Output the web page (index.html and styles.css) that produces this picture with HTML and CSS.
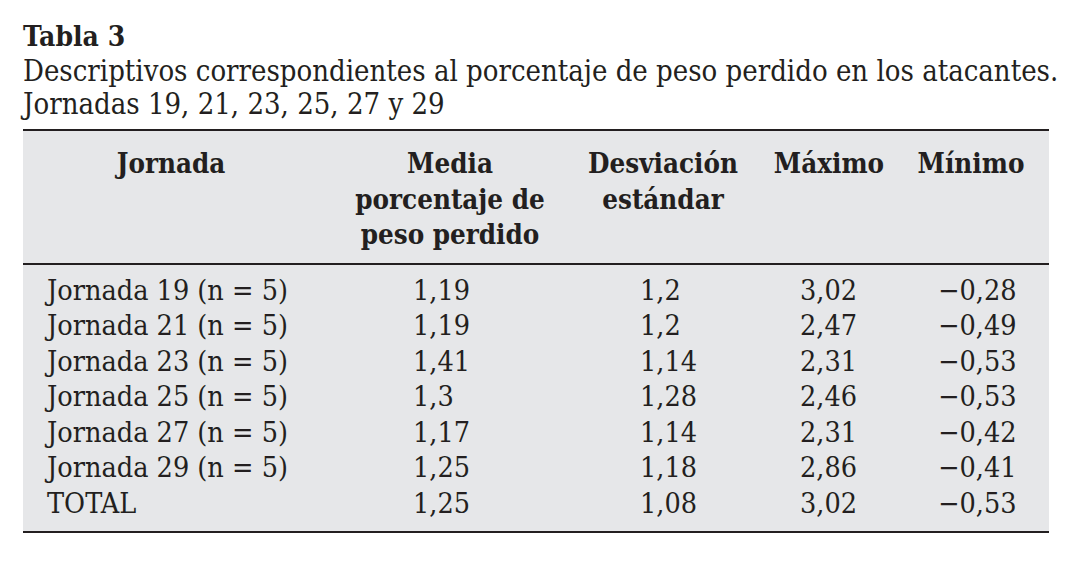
FILE: index.html
```html
<!DOCTYPE html>
<html lang="es">
<head>
<meta charset="utf-8">
<title>Tabla 3</title>
<link rel="stylesheet" href="styles.css">
</head>
<body>
<main class="figure">
  <h1 class="label">Tabla 3</h1>
  <p class="caption">Descriptivos correspondientes al porcentaje de peso perdido en los atacantes.<br>Jornadas 19, 21, 23, 25, 27 y 29</p>
  <table class="data">
    <colgroup>
      <col class="c1"><col class="c2"><col class="c3"><col class="c4"><col class="c5">
    </colgroup>
    <thead>
      <tr>
        <th class="h1">Jornada</th>
        <th>Media<br>porcentaje de<br>peso perdido</th>
        <th>Desviación<br>estándar</th>
        <th>Máximo</th>
        <th>Mínimo</th>
      </tr>
    </thead>
    <tbody>
      <tr class="first"><td class="k">Jornada 19 (n = 5)</td><td class="v2">1,19</td><td class="v3">1,2</td><td class="v4">3,02</td><td class="v5">−0,28</td></tr>
      <tr><td class="k">Jornada 21 (n = 5)</td><td class="v2">1,19</td><td class="v3">1,2</td><td class="v4">2,47</td><td class="v5">−0,49</td></tr>
      <tr><td class="k">Jornada 23 (n = 5)</td><td class="v2">1,41</td><td class="v3">1,14</td><td class="v4">2,31</td><td class="v5">−0,53</td></tr>
      <tr><td class="k">Jornada 25 (n = 5)</td><td class="v2">1,3</td><td class="v3">1,28</td><td class="v4">2,46</td><td class="v5">−0,53</td></tr>
      <tr><td class="k">Jornada 27 (n = 5)</td><td class="v2">1,17</td><td class="v3">1,14</td><td class="v4">2,31</td><td class="v5">−0,42</td></tr>
      <tr><td class="k">Jornada 29 (n = 5)</td><td class="v2">1,25</td><td class="v3">1,18</td><td class="v4">2,86</td><td class="v5">−0,41</td></tr>
      <tr class="last"><td class="k">TOTAL</td><td class="v2">1,25</td><td class="v3">1,08</td><td class="v4">3,02</td><td class="v5">−0,53</td></tr>
    </tbody>
  </table>
</main>
</body>
</html>
```
FILE: styles.css
```css
html, body {
  margin: 0;
  padding: 0;
  background: #ffffff;
}

body {
  font-family: "DejaVu Serif Condensed", "DejaVu Serif", "Liberation Serif", serif;
  font-stretch: condensed;
  color: #231f20;
}

.figure {
  width: 1026px;
  padding: 18px 0 0 23px;
}

.label {
  margin: 0;
  font-size: 28px;
  line-height: 37px;
  font-weight: bold;
}

.caption {
  margin: 0;
  font-size: 29px;
  line-height: 33px;
  white-space: nowrap;
}

.data {
  margin-top: 8px;
  width: 1026px;
  border-collapse: collapse;
  table-layout: fixed;
  background: #e6e7e9;
  border-top: 2px solid #231f20;
  border-bottom: 2px solid #231f20;
}

.c1 { width: 316px; }
.c2 { width: 222px; }
.c3 { width: 204px; }
.c4 { width: 128px; }
.c5 { width: 156px; }

.data th {
  font-size: 27.5px;
  line-height: 35.5px;
  font-weight: bold;
  text-align: center;
  vertical-align: top;
  padding: 15px 0 10px;
  border-bottom: 2px solid #231f20;
}

.data th.h1 {
  padding-right: 20px;
}

.data td {
  font-size: 28.5px;
  line-height: 35.6px;
  padding: 0;
  white-space: nowrap;
}

.data tr.first td { padding-top: 8px; }
.data tr.last td { padding-bottom: 9px; }

.data td.k  { padding-left: 24px; }
.data td.v2 { padding-left: 74px; }
.data td.v3 { padding-left: 79px; }
.data td.v4 { padding-left: 35px; }
.data td.v5 { padding-left: 45px; }
```
